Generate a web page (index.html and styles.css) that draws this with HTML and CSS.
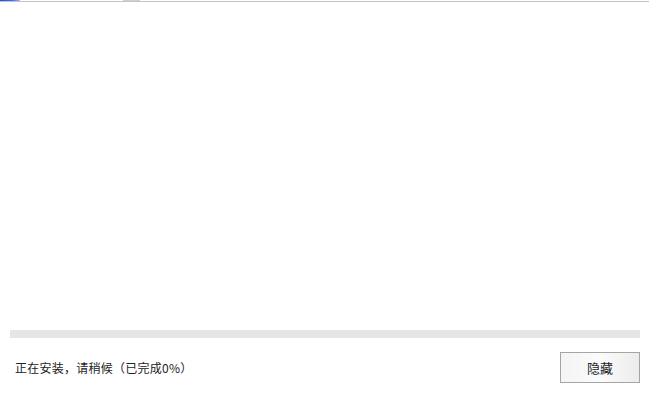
FILE: index.html
```html
<!DOCTYPE html>
<html lang="zh-CN">
<head>
    <meta charset="UTF-8">
    <meta name="viewport" content="width=device-width, initial-scale=1.0">
    <title>安装</title>
    <link rel="stylesheet" href="styles.css">
</head>
<body>
    <div class="window">
        <div class="top-strip">
            <span class="tab-blue"></span>
            <span class="tab-gray"></span>
        </div>
        <div class="content"></div>
        <div class="progress">
            <div class="progress-fill"></div>
        </div>
        <div class="footer">
            <span class="status">正在安装，请稍候（已完成0%）</span>
            <button class="hide-button">隐藏</button>
        </div>
    </div>
</body>
</html>
```

FILE: styles.css
```css
body {
    margin: 0;
    background: #ffffff;
    font-family: "Noto Sans CJK SC", "Microsoft YaHei", sans-serif;
    color: #333;
}
.window {
    width: 649px;
    height: 393px;
    display: flex;
    flex-direction: column;
    overflow: hidden;
}
.top-strip {
    height: 1px;
    border-bottom: 1px solid #c4c4c4;
    display: flex;
}
.tab-blue {
    width: 20px;
    height: 1px;
    background: linear-gradient(90deg, #1f4fd8 0%, #3b6ff0 60%, #9fb3e8 100%);
}
.tab-gray {
    width: 17px;
    height: 1px;
    margin-left: 103px;
    background: #d0d0d0;
}
.content {
    height: 328px;
}
.progress {
    height: 8px;
    margin: 0 9px 0 10px;
    background: #e6e6e6;
}
.progress-fill {
    width: 0;
    height: 100%;
    background: #4aa3df;
}
.footer {
    display: flex;
    justify-content: space-between;
    align-items: center;
    padding: 14px 9px 0 15px;
}
.status {
    font-size: 12px;
    letter-spacing: 0.25px;
    color: #222;
}
.hide-button {
    width: 80px;
    height: 31px;
    border: 1px solid #a5a5a5;
    border-radius: 0;
    background: linear-gradient(90deg, #f4f4f4 0%, #fbfbfb 50%, #ececec 100%);
    font-family: inherit;
    font-size: 13px;
    color: #222;
    padding: 0;
}
```
